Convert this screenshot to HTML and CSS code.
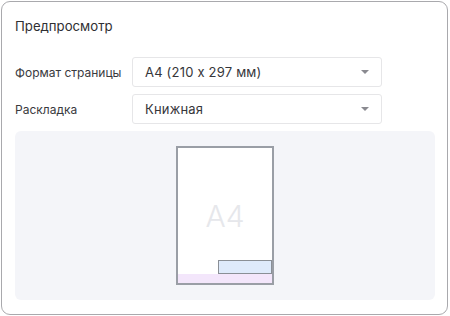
FILE: index.html
```html
<!DOCTYPE html>
<html>
<head>
<meta charset="utf-8">
<link rel="stylesheet" href="styles.css">
</head>
<body>
<div class="card">
  <div class="title">Предпросмотр</div>
  <div class="rows">
    <div class="row">
      <div class="label">Формат страницы</div>
      <div class="select"><span>A4 (210 x 297 мм)</span><span class="caret"></span></div>
    </div>
    <div class="row">
      <div class="label">Раскладка</div>
      <div class="select"><span>Книжная</span><span class="caret"></span></div>
    </div>
  </div>
  <div class="preview">
    <div class="page">
      <div class="page-label">A4</div>
      <div class="page-foot">
        <div class="blue-box"></div>
        <div class="pink-strip"></div>
      </div>
    </div>
  </div>
</div>
</body>
</html>
```
FILE: styles.css
```css
html, body {
  margin: 0;
  padding: 0;
  background: #ffffff;
}
body {
  width: 450px;
  height: 316px;
  font-family: Inter, "Noto Sans", sans-serif;
  font-feature-settings: "calt" 0;
  color: #2f2f33;
}
.card {
  box-sizing: border-box;
  margin: 1px 0 0 1px;
  width: 447px;
  height: 314px;
  border: 1px solid #a9a9ad;
  border-radius: 9px;
  padding: 0 12px 0 13px;
  display: flex;
  flex-direction: column;
}
.title {
  font-size: 13.2px;
  line-height: 16px;
  margin-top: 16px;
  height: 16px;
}
.rows {
  margin-top: 23px;
  display: flex;
  flex-direction: column;
  gap: 7px;
}
.row {
  display: flex;
  align-items: center;
}
.label {
  width: 117px;
  font-size: 12px;
  color: #3a3a3e;
}
.select {
  box-sizing: border-box;
  width: 250px;
  height: 30px;
  border: 1px solid #e6e6e8;
  border-radius: 3px;
  display: flex;
  align-items: center;
  justify-content: space-between;
  padding: 0 12px 0 12px;
  font-size: 13px;
  letter-spacing: 0.2px;
  color: #36363a;
}
.caret {
  width: 0;
  height: 0;
  border-left: 4px solid transparent;
  border-right: 4px solid transparent;
  border-top: 4px solid #8a8a90;
}
.preview {
  margin-top: 7px;
  width: 420px;
  height: 169px;
  background: #f4f5f9;
  border-radius: 6px;
  display: flex;
  justify-content: center;
  align-items: flex-start;
  padding-top: 15px;
  box-sizing: border-box;
}
.page {
  box-sizing: border-box;
  width: 98px;
  height: 139px;
  border: 2px solid #9a9ea6;
  background: #ffffff;
  display: flex;
  flex-direction: column;
}
.page-label {
  flex: 1;
  display: flex;
  align-items: center;
  justify-content: center;
  font-size: 30px;
  font-weight: 300;
  color: #e6e7eb;
  padding-top: 24px;
}
.page-foot {
  display: flex;
  flex-direction: column;
  align-items: flex-end;
}
.blue-box {
  box-sizing: border-box;
  width: 54px;
  height: 14px;
  background: #deeafb;
  border: 1px solid #8a8f96;
}
.pink-strip {
  align-self: stretch;
  height: 9px;
  background: #f3e6fb;
}
```
